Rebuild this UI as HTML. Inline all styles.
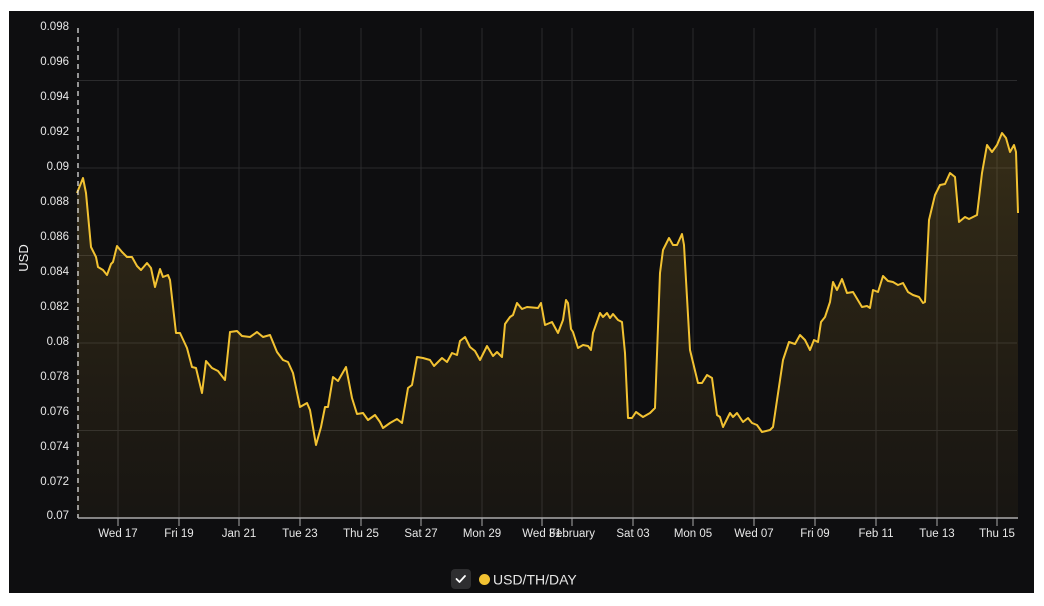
<!DOCTYPE html>
<html><head><meta charset="utf-8"><style>
html,body{margin:0;padding:0;background:#fff;width:1044px;height:606px;overflow:hidden}
svg{display:block}
text{font-family:"Liberation Sans",Arial,sans-serif}
</style></head><body>
<svg width="1044" height="606" viewBox="0 0 1044 606" xmlns="http://www.w3.org/2000/svg">
<defs>
<linearGradient id="g" x1="0" y1="130" x2="0" y2="518" gradientUnits="userSpaceOnUse">
<stop offset="0" stop-color="#c9a032" stop-opacity="0.22"/>
<stop offset="1" stop-color="#8a6a2a" stop-opacity="0.08"/>
</linearGradient>
</defs>
<rect x="9" y="11" width="1025" height="582" fill="#0e0e10"/>
<g stroke="#2b2b2d" stroke-width="1">
<line x1="78" y1="80.5" x2="1017" y2="80.5"/>
<line x1="78" y1="168" x2="1017" y2="168"/>
<line x1="78" y1="255.5" x2="1017" y2="255.5"/>
<line x1="78" y1="343" x2="1017" y2="343"/>
<line x1="78" y1="430.5" x2="1017" y2="430.5"/>
<line x1="118" y1="28" x2="118" y2="518"/><line x1="179" y1="28" x2="179" y2="518"/>
<line x1="239" y1="28" x2="239" y2="518"/><line x1="300" y1="28" x2="300" y2="518"/>
<line x1="361" y1="28" x2="361" y2="518"/><line x1="421" y1="28" x2="421" y2="518"/>
<line x1="482" y1="28" x2="482" y2="518"/><line x1="542" y1="28" x2="542" y2="518"/>
<line x1="572" y1="28" x2="572" y2="518"/><line x1="633" y1="28" x2="633" y2="518"/>
<line x1="693" y1="28" x2="693" y2="518"/><line x1="754" y1="28" x2="754" y2="518"/>
<line x1="815" y1="28" x2="815" y2="518"/><line x1="876" y1="28" x2="876" y2="518"/>
<line x1="937" y1="28" x2="937" y2="518"/><line x1="997" y1="28" x2="997" y2="518"/>
</g>
<path id="d" fill="url(#g)" stroke="none" d="M77,193 L83,178 86,193 91,247 96,257 98,267 103,270 107,275 111,264 113,262 117,246 122,252 127,257 132,257 137,266 141,270 147,263 151,268 155,287 160,269 163,277 168,275 170,280 176,333 180,333 187,348 192,367 196,368 202,393 206,361 212,368 218,371 225,380 230,332 237,331 242,336 250,337 257,332 263,337 270,335 277,352 283,360 288,362 293,373 300,407 307,403 310,410 316,445 321,427 325,407 328,407 333,377 338,381 346,367 352,398 357,414 363,413 368,420 375,415 380,422 383,428 390,423 397,419 402,423 408,388 412,385 417,357 423,358 430,360 434,366 442,358 447,362 452,353 457,355 460,341 465,337 470,347 475,351 480,360 487,346 493,356 497,352 502,357 505,324 510,317 513,315 517,303 522,309 527,307 538,308 541,303 545,325 552,322 558,333 563,320 566,300 568,303 571,329 573,332 578,348 583,345 588,346 591,350 593,333 600,313 603,317 607,313 610,318 613,314 618,320 622,322 625,353 628,418 632,418 636,412 643,417 650,413 655,408 660,273 663,250 669,238 673,245 677,245 682,234 684,245 690,350 698,383 702,383 707,375 712,378 717,415 720,417 723,427 730,413 733,417 737,413 743,422 748,418 752,423 757,425 762,432 770,430 773,427 783,360 789,342 795,344 800,335 805,340 810,350 814,340 818,342 821,322 825,317 830,302 833,282 837,290 842,279 847,293 853,292 862,307 867,306 870,308 873,290 878,292 883,276 888,281 893,282 898,285 903,283 908,292 913,295 919,297 923,303 925,302 929,220 935,195 940,185 945,184 950,173 955,177 959,222 965,217 969,219 977,215 982,173 987,145 992,152 997,145 1002,133 1006,138 1010,152 1014,145 1016,152 1018,213 L1018,518 77,518 Z"/>
<path fill="none" stroke="#f2c232" stroke-width="2" stroke-linejoin="round" d="M77,193 L83,178 86,193 91,247 96,257 98,267 103,270 107,275 111,264 113,262 117,246 122,252 127,257 132,257 137,266 141,270 147,263 151,268 155,287 160,269 163,277 168,275 170,280 176,333 180,333 187,348 192,367 196,368 202,393 206,361 212,368 218,371 225,380 230,332 237,331 242,336 250,337 257,332 263,337 270,335 277,352 283,360 288,362 293,373 300,407 307,403 310,410 316,445 321,427 325,407 328,407 333,377 338,381 346,367 352,398 357,414 363,413 368,420 375,415 380,422 383,428 390,423 397,419 402,423 408,388 412,385 417,357 423,358 430,360 434,366 442,358 447,362 452,353 457,355 460,341 465,337 470,347 475,351 480,360 487,346 493,356 497,352 502,357 505,324 510,317 513,315 517,303 522,309 527,307 538,308 541,303 545,325 552,322 558,333 563,320 566,300 568,303 571,329 573,332 578,348 583,345 588,346 591,350 593,333 600,313 603,317 607,313 610,318 613,314 618,320 622,322 625,353 628,418 632,418 636,412 643,417 650,413 655,408 660,273 663,250 669,238 673,245 677,245 682,234 684,245 690,350 698,383 702,383 707,375 712,378 717,415 720,417 723,427 730,413 733,417 737,413 743,422 748,418 752,423 757,425 762,432 770,430 773,427 783,360 789,342 795,344 800,335 805,340 810,350 814,340 818,342 821,322 825,317 830,302 833,282 837,290 842,279 847,293 853,292 862,307 867,306 870,308 873,290 878,292 883,276 888,281 893,282 898,285 903,283 908,292 913,295 919,297 923,303 925,302 929,220 935,195 940,185 945,184 950,173 955,177 959,222 965,217 969,219 977,215 982,173 987,145 992,152 997,145 1002,133 1006,138 1010,152 1014,145 1016,152 1018,213"/>
<line x1="78" y1="28" x2="78" y2="518" stroke="#eee" stroke-width="1.2" stroke-dasharray="5,4"/>
<line x1="78" y1="518" x2="1018" y2="518" stroke="#aaa" stroke-width="1.5"/>
<g stroke="#aaa" stroke-width="1">
<line x1="118" y1="518" x2="118" y2="526"/><line x1="179" y1="518" x2="179" y2="526"/><line x1="239" y1="518" x2="239" y2="526"/><line x1="300" y1="518" x2="300" y2="526"/><line x1="361" y1="518" x2="361" y2="526"/><line x1="421" y1="518" x2="421" y2="526"/><line x1="482" y1="518" x2="482" y2="526"/><line x1="542" y1="518" x2="542" y2="526"/><line x1="572" y1="518" x2="572" y2="526"/><line x1="633" y1="518" x2="633" y2="526"/><line x1="693" y1="518" x2="693" y2="526"/><line x1="754" y1="518" x2="754" y2="526"/><line x1="815" y1="518" x2="815" y2="526"/><line x1="876" y1="518" x2="876" y2="526"/><line x1="937" y1="518" x2="937" y2="526"/><line x1="997" y1="518" x2="997" y2="526"/>
</g>
<g fill="#e8e8e8" font-size="11.5" text-anchor="end">
<text x="69" y="30">0.098</text><text x="69" y="65">0.096</text><text x="69" y="100">0.094</text><text x="69" y="135">0.092</text><text x="69" y="170">0.09</text><text x="69" y="205">0.088</text><text x="69" y="240">0.086</text><text x="69" y="275">0.084</text><text x="69" y="310">0.082</text><text x="69" y="345">0.08</text><text x="69" y="380">0.078</text><text x="69" y="415">0.076</text><text x="69" y="450">0.074</text><text x="69" y="485">0.072</text><text x="69" y="519">0.07</text>
</g>
<g fill="#e8e8e8" font-size="11.5" text-anchor="middle">
<text x="118" y="537">Wed 17</text><text x="179" y="537">Fri 19</text><text x="239" y="537">Jan 21</text><text x="300" y="537">Tue 23</text><text x="361" y="537">Thu 25</text><text x="421" y="537">Sat 27</text><text x="482" y="537">Mon 29</text><text x="542" y="537">Wed 31</text><text x="572" y="537">February</text><text x="633" y="537">Sat 03</text><text x="693" y="537">Mon 05</text><text x="754" y="537">Wed 07</text><text x="815" y="537">Fri 09</text><text x="876" y="537">Feb 11</text><text x="937" y="537">Tue 13</text><text x="997" y="537">Thu 15</text>
</g>
<text x="28" y="258" fill="#eee" font-size="13" text-anchor="middle" transform="rotate(-90 28 258)">USD</text>
<rect x="451" y="569" width="20" height="20" rx="4" fill="#2e2e30"/>
<path d="M456.5,579 L459.5,582 L465,576" fill="none" stroke="#fff" stroke-width="1.8" stroke-linecap="round" stroke-linejoin="round"/>
<circle cx="484.5" cy="579.5" r="5.5" fill="#f2c232"/>
<text x="493" y="584.5" fill="#e6e6e6" font-size="14">USD/TH/DAY</text>
</svg>
</body></html>
